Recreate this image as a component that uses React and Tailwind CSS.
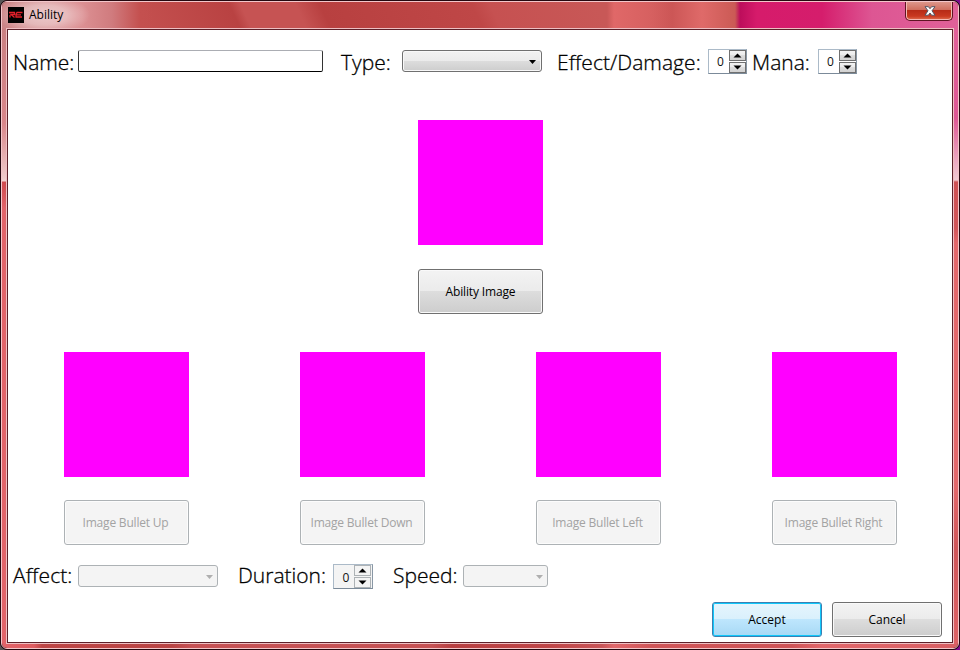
import React from "react";

const Label = ({ className = "", children }) => (
  <span className={`block shrink-0 whitespace-nowrap text-[21px] leading-[26px] font-light text-black [-webkit-text-stroke:0.3px_#000] ${className}`}>{children}</span>
);

const Combo = ({ className = "", disabled }) => (
  <div
    className={`flex h-[22px] shrink-0 items-center justify-end rounded-[3px] border ${
      disabled
        ? "border-[#adb2b5] bg-[#f4f4f4] pr-[4px]"
        : "border-[#707070] bg-[linear-gradient(#f2f2f2_0%,#ebebeb_50%,#dddddd_50%,#cdcdcd_100%)] pr-[5px] shadow-[inset_0_0_0_1px_#f8f8f8]"
    } ${className}`}
  >
    <svg width="7" height="4" viewBox="0 0 7 4" className="mt-[1px] block">
      <path d="M0 0H7L3.5 4Z" fill={disabled ? "#afafaf" : "#000"} />
    </svg>
  </div>
);

const SpinButton = ({ down, disabled }) => (
  <div
    className={`flex h-[11px] w-[17px] items-center justify-center border ${
      disabled ? "border-[#adb2b5] bg-[#f4f4f4]" : "border-[#707070] bg-[linear-gradient(#f3f3f3,#ebebeb_50%,#dddddd_50%,#d2d2d2)]"
    }`}
  >
    <svg width="9" height="5" viewBox="0 0 9 5" className="block">
      <path d={down ? "M.5 .5H8.5L4.5 4.5Z" : "M.5 4.5H8.5L4.5 .5Z"} fill="#000" />
    </svg>
  </div>
);

const Spinner = ({ className = "", disabled }) => (
  <div
    className={`flex h-[25px] shrink-0 border border-t-[#abbac8] border-r-[#8997a5] border-b-[#7b8a99] border-l-[#abbac8] ${
      disabled ? "w-[40px] bg-[#f4f4f4]" : "w-[39px] bg-white"
    } ${className}`}
  >
    <span className={`w-[20px] text-center text-[12px] leading-[23px] text-[#111] ${disabled ? "pt-[1px] pl-[4px]" : "pl-[3px]"}`}>0</span>
    <div className="flex flex-col gap-[1px]">
      <SpinButton disabled={disabled} />
      <SpinButton down disabled={disabled} />
    </div>
  </div>
);

const Button = ({ className = "", variant = "normal", children }) => {
  const styles = {
    normal:
      "border-[#707070] text-black bg-[linear-gradient(#f3f3f3_0%,#ebebeb_50%,#dddddd_50%,#cdcdcd_100%)] shadow-[inset_0_0_0_1px_#f9f9f9]",
    primary:
      "border-[#3c7fb1] text-black bg-[linear-gradient(#e6f5fd_0%,#d9f0fc_50%,#bee6fd_50%,#a7d9f5_100%)] shadow-[inset_0_0_0_1px_#10c8fb]",
    disabled: "border-[#adb2b5] text-[#a3a3a3] bg-[#f4f4f4] shadow-[inset_0_0_0_1px_#fcfcfc]",
  };
  return (
    <button className={`flex shrink-0 items-center justify-center rounded-[3px] border pt-px text-[12px] whitespace-nowrap ${styles[variant]} ${className}`}>
      {children}
    </button>
  );
};

const bullets = ["Image Bullet Up", "Image Bullet Down", "Image Bullet Left", "Image Bullet Right"];

const TitleBar = () => (
  <div className="flex h-[26px] shrink-0 justify-between bg-[linear-gradient(90deg,#cc8587_0px,#dc9093_80px,#d07b7e_110px,#c4504f_138px,#c4504f00_150px,#c8585700_590px,#c85857_605px,#e06868_612px,#d66060_650px,#cc5656_670px,#df6a69_700px,#cb5a55_733px,#bd0d5b_738px,#d61b6b_755px,#d51d6c_820px,#dd5693_870px,#e16199_957px),linear-gradient(65deg,#c4504f_128px,#b94242_216px,#c65353_226px,#c65353_276px,#b84040_298px,#bf4747_436px,#c65151_452px,#c85857_549px)]">
    <div className="flex h-full items-center bg-[radial-gradient(ellipse_46px_20px_at_42px_13px,#ffffff88_0%,#ffffff66_50%,transparent_100%)] pr-[30px] pl-[6px]">
      <svg width="16" height="16" viewBox="0 0 16 16" className="mr-[5px] block shrink-0">
        <rect width="16" height="16" fill="#000" />
        <path d="M1 5.5H6.5V7.5H3L6.5 10.5M2 8V10.5M14.5 5.5H9L8 7.5V10H14M8 7.8H13" fill="none" stroke="#e2202a" strokeWidth="1.3" />
      </svg>
      <span className="text-[12px] text-black">Ability</span>
    </div>
    <div className="mt-[-1px] mr-[5px] flex h-[20px] w-[48px] items-center justify-center rounded-b-[5px] border border-t-0 border-[#5f1423] bg-[linear-gradient(#df9b90_0%,#d07060_45%,#b72b17_50%,#c93920_80%,#e17153_100%)] pl-[2px] shadow-[inset_0_0_0_1px_#f4bab4]">
      <svg width="12" height="10" viewBox="0 0 12 10" className="block">
        <path d="M1 .7H4.4L6 2.7 7.6 .7H11L8 4.8 11 9.2H7.6L6 7 4.4 9.2H1L4 4.8Z" fill="#fff" stroke="#535666" strokeWidth="1" />
      </svg>
    </div>
  </div>
);

export default function App() {
  return (
    <div className="h-[650px] w-[960px] overflow-hidden bg-[linear-gradient(90deg,#555_50%,#7b0b8d_50%)] font-['Open_Sans','Noto_Sans',sans-serif]">
      <div className="h-full rounded-[7px] border border-[#26080f] bg-[#26080f]">
        <div className="flex h-full flex-col overflow-hidden rounded-[6px] border border-[#f3c6ca]">
          <TitleBar />
          <div className="flex min-h-0 flex-1">
            <div className="w-[4px] shrink-0 bg-[linear-gradient(#ca8082_0px,#d9868a_95px,#efcaca_150px,#f2d4d2_153px,#d04a4e_154px,#e2646a_180px,#e2646a_100%)]" />
            <main className="flex min-w-0 flex-1 flex-col border border-[#eebfc3]">
              <div className="flex flex-1 flex-col border border-[#5d2029] bg-white">
                <div className="flex h-[90px] items-start pt-[19px] pl-[5px]">
                  <Label className="w-[65px]">Name:</Label>
                  <div className="mt-[1px] h-[22px] w-[245px] shrink-0 rounded-[2px] border border-t-[#abadb3] border-r-[#333] border-b-black border-l-[#333] bg-white" />
                  <Label className="ml-[18px] w-[61px]">Type:</Label>
                  <Combo className="mt-[1px] w-[140px]" />
                  <Label className="ml-[15px] w-[151px] tracking-[0.05px]">Effect/Damage:</Label>
                  <Spinner />
                  <Label className="ml-[5px] w-[66px]">Mana:</Label>
                  <Spinner />
                </div>
                <div className="flex flex-col items-center gap-[24px] pl-px">
                  <div className="size-[125px] bg-[#ff00ff]" />
                  <Button className="h-[45px] w-[125px] tracking-[-0.15px]">Ability Image</Button>
                </div>
                <div className="mt-[38px] flex gap-[111px] pl-[56px]">
                  {bullets.map((text) => (
                    <div key={text} className="flex flex-col gap-[23px]">
                      <div className="size-[125px] bg-[#ff00ff]" />
                      <Button variant="disabled" className="h-[45px] w-[125px] pr-[2px] tracking-[-0.2px]">{text}</Button>
                    </div>
                  ))}
                </div>
                <div className="mt-[17px] flex h-[29px] items-start pl-[5px]">
                  <Label className="w-[65px] tracking-[0.1px]">Affect:</Label>
                  <Combo disabled className="mt-[3px] w-[140px]" />
                  <Label className="ml-[20px] w-[95px]">Duration:</Label>
                  <Spinner disabled className="mt-[2px]" />
                  <Label className="ml-[20px] w-[70px]">Speed:</Label>
                  <Combo disabled className="mt-[3px] w-[85px]" />
                </div>
                <div className="mt-[11px] flex justify-end gap-[10px] pr-[10px]">
                  <Button variant="primary" className="h-[35px] w-[110px]">Accept</Button>
                  <Button className="h-[35px] w-[110px]">Cancel</Button>
                </div>
              </div>
            </main>
            <div className="w-[4px] shrink-0 bg-[linear-gradient(#e16199_0px,#dd5794_90px,#eba3be_130px,#f0cad2_152px,#cd5255_154px,#d15559_200px,#e2676b_215px,#e2676b_460px,#cf5559_520px,#dd6266_100%)]" />
          </div>
          <div className="h-[4px] shrink-0 bg-[linear-gradient(90deg,#e2646a_0px,#de5c60_32px,#be4646_40px,#ba4444_170px,#c75255_190px,#c65254_430px,#b84042_450px,#c04648_550px,#c95558_600px,#e0686b_612px,#d05558_650px,#cf5457_790px,#e2676b_820px,#d85f63_957px)]" />
        </div>
      </div>
    </div>
  );
}
